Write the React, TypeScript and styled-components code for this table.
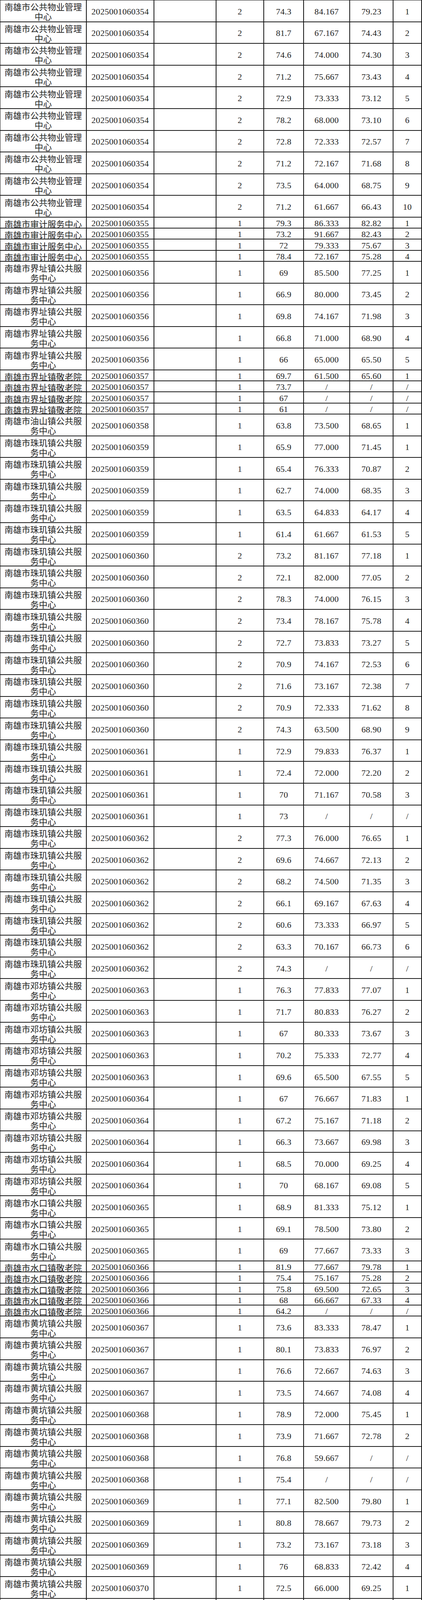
import React from 'react';
import styled, { createGlobalStyle } from 'styled-components';

type Group = {
  name: string;
  code: string;
  n: number;
  tall: boolean;
  rows: (string | number)[][];
};

const S = '/';

const groups: Group[] = [
  {
    name: '南雄市公共物业管理中心', code: '2025001060354', n: 2, tall: true,
    rows: [
      ['74.3', '84.167', '79.23', 1], ['81.7', '67.167', '74.43', 2], ['74.6', '74.000', '74.30', 3],
      ['71.2', '75.667', '73.43', 4], ['72.9', '73.333', '73.12', 5], ['78.2', '68.000', '73.10', 6],
      ['72.8', '72.333', '72.57', 7], ['71.2', '72.167', '71.68', 8], ['73.5', '64.000', '68.75', 9],
      ['71.2', '61.667', '66.43', 10],
    ],
  },
  {
    name: '南雄市审计服务中心', code: '2025001060355', n: 1, tall: false,
    rows: [['79.3', '86.333', '82.82', 1], ['73.2', '91.667', '82.43', 2], ['72', '79.333', '75.67', 3], ['78.4', '72.167', '75.28', 4]],
  },
  {
    name: '南雄市界址镇公共服务中心', code: '2025001060356', n: 1, tall: true,
    rows: [['69', '85.500', '77.25', 1], ['66.9', '80.000', '73.45', 2], ['69.8', '74.167', '71.98', 3], ['66.8', '71.000', '68.90', 4], ['66', '65.000', '65.50', 5]],
  },
  {
    name: '南雄市界址镇敬老院', code: '2025001060357', n: 1, tall: false,
    rows: [['69.7', '61.500', '65.60', 1], ['73.7', S, S, S], ['67', S, S, S], ['61', S, S, S]],
  },
  {
    name: '南雄市油山镇公共服务中心', code: '2025001060358', n: 1, tall: true,
    rows: [['63.8', '73.500', '68.65', 1]],
  },
  {
    name: '南雄市珠玑镇公共服务中心', code: '2025001060359', n: 1, tall: true,
    rows: [['65.9', '77.000', '71.45', 1], ['65.4', '76.333', '70.87', 2], ['62.7', '74.000', '68.35', 3], ['63.5', '64.833', '64.17', 4], ['61.4', '61.667', '61.53', 5]],
  },
  {
    name: '南雄市珠玑镇公共服务中心', code: '2025001060360', n: 2, tall: true,
    rows: [
      ['73.2', '81.167', '77.18', 1], ['72.1', '82.000', '77.05', 2], ['78.3', '74.000', '76.15', 3],
      ['73.4', '78.167', '75.78', 4], ['72.7', '73.833', '73.27', 5], ['70.9', '74.167', '72.53', 6],
      ['71.6', '73.167', '72.38', 7], ['70.9', '72.333', '71.62', 8], ['74.3', '63.500', '68.90', 9],
    ],
  },
  {
    name: '南雄市珠玑镇公共服务中心', code: '2025001060361', n: 1, tall: true,
    rows: [['72.9', '79.833', '76.37', 1], ['72.4', '72.000', '72.20', 2], ['70', '71.167', '70.58', 3], ['73', S, S, S]],
  },
  {
    name: '南雄市珠玑镇公共服务中心', code: '2025001060362', n: 2, tall: true,
    rows: [
      ['77.3', '76.000', '76.65', 1], ['69.6', '74.667', '72.13', 2], ['68.2', '74.500', '71.35', 3],
      ['66.1', '69.167', '67.63', 4], ['60.6', '73.333', '66.97', 5], ['63.3', '70.167', '66.73', 6],
      ['74.3', S, S, S],
    ],
  },
  {
    name: '南雄市邓坊镇公共服务中心', code: '2025001060363', n: 1, tall: true,
    rows: [['76.3', '77.833', '77.07', 1], ['71.7', '80.833', '76.27', 2], ['67', '80.333', '73.67', 3], ['70.2', '75.333', '72.77', 4], ['69.6', '65.500', '67.55', 5]],
  },
  {
    name: '南雄市邓坊镇公共服务中心', code: '2025001060364', n: 1, tall: true,
    rows: [['67', '76.667', '71.83', 1], ['67.2', '75.167', '71.18', 2], ['66.3', '73.667', '69.98', 3], ['68.5', '70.000', '69.25', 4], ['70', '68.167', '69.08', 5]],
  },
  {
    name: '南雄市水口镇公共服务中心', code: '2025001060365', n: 1, tall: true,
    rows: [['68.9', '81.333', '75.12', 1], ['69.1', '78.500', '73.80', 2], ['69', '77.667', '73.33', 3]],
  },
  {
    name: '南雄市水口镇敬老院', code: '2025001060366', n: 1, tall: false,
    rows: [['81.9', '77.667', '79.78', 1], ['75.4', '75.167', '75.28', 2], ['75.8', '69.500', '72.65', 3], ['68', '66.667', '67.33', 4], ['64.2', S, S, S]],
  },
  {
    name: '南雄市黄坑镇公共服务中心', code: '2025001060367', n: 1, tall: true,
    rows: [['73.6', '83.333', '78.47', 1], ['80.1', '73.833', '76.97', 2], ['76.6', '72.667', '74.63', 3], ['73.5', '74.667', '74.08', 4]],
  },
  {
    name: '南雄市黄坑镇公共服务中心', code: '2025001060368', n: 1, tall: true,
    rows: [['78.9', '72.000', '75.45', 1], ['73.9', '71.667', '72.78', 2], ['76.8', '59.667', S, S], ['75.4', S, S, S]],
  },
  {
    name: '南雄市黄坑镇公共服务中心', code: '2025001060369', n: 1, tall: true,
    rows: [['77.1', '82.500', '79.80', 1], ['80.8', '78.667', '79.73', 2], ['73.2', '73.167', '73.18', 3], ['76', '68.833', '72.42', 4]],
  },
  {
    name: '南雄市黄坑镇公共服务中心', code: '2025001060370', n: 1, tall: true,
    rows: [['72.5', '66.000', '69.25', 1], ['63.7', '72.500', '68.10', 2], ['63.6', '65.500', '64.55', 3], ['73.6', '57.500', S, S]],
  },
  {
    name: '南雄市百顺镇公共服务中心', code: '2025001060371', n: 1, tall: true,
    rows: [['75', '83.667', '79.33', 1], ['76.3', '76.333', '76.32', 2], ['70.9', '68.667', '69.78', 3], ['70.8', S, S, S]],
  },
  {
    name: '南雄市百顺镇公共服务中心', code: '2025001060372', n: 1, tall: true,
    rows: [['70.1', '78.167', '74.13', 1], ['73', '67.833', '70.42', 2], ['68.5', '68.667', '68.58', 3], ['63.4', '65.167', '64.28', 4], ['63.6', '64.500', '64.05', 5]],
  },
  {
    name: '南雄市雄州街道公共服务中心', code: '2025001060373', n: 1, tall: true,
    rows: [['71.6', '72.167', '71.88', 1], ['60.2', '71.833', '66.02', 2]],
  },
  {
    name: '南雄市雄州街道公共服务中心', code: '2025001060374', n: 1, tall: true,
    rows: [['74.9', '81.833', '78.37', 1], ['79.8', '70.833', '75.32', 2], ['74.8', '73.333', '74.07', 3], ['73.8', '69.667', '71.73', 4]],
  },
  {
    name: '南雄市帽子峰镇敬老院', code: '2025001060375', n: 1, tall: true,
    rows: [['70', '81.000', '75.50', 1], ['67.1', '77.500', '72.30', 2], ['68.6', '70.667', '69.63', 3], ['66.8', '68.333', '67.57', 4], ['64.1', S, S, S]],
  },
];

const GlobalStyle = createGlobalStyle`
  html, body {
    margin: 0;
    padding: 0;
    background: #fff;
  }
  * {
    box-sizing: border-box;
  }
`;

const Sheet = styled.div`
  width: 1080px;
  border-top: 1px solid #111;
  border-left: 1px solid #111;
  color: #222;
`;

const Row = styled.div<{ $tall: boolean }>`
  display: grid;
  grid-template-columns: 1fr 173px 159px 122px 102px 118px 111px 73px;
  height: ${p => (p.$tall ? 55.6 : 28.25)}px;
`;

const Cell = styled.div`
  display: flex;
  align-items: center;
  justify-content: center;
  text-align: center;
  padding: 4px 4px 0;
  font-family: 'Liberation Serif', serif;
  font-size: 22px;
  line-height: 22px;
  letter-spacing: 0.3px;
  white-space: nowrap;
  border-right: 2px solid #111;
  border-bottom: 2px solid #1a1a1a;
`;

const NameCell = styled(Cell)<{ $tall: boolean }>`
  font-family: 'Noto Sans CJK SC', sans-serif;
  letter-spacing: 0;
  line-height: ${p => (p.$tall ? 25 : 22)}px;
  padding: ${p => (p.$tall ? 3 : 4)}px 8px 0;
  white-space: normal;
  word-break: break-all;
`;

export default function App() {
  return (
    <>
      <GlobalStyle />
      <Sheet>
        {groups.map((g, gi) =>
          g.rows.map((r, ri) => (
            <Row key={`${gi}-${ri}`} $tall={g.tall}>
              <NameCell $tall={g.tall}>{g.name}</NameCell>
              <Cell>{g.code}</Cell>
              <Cell />
              <Cell>{g.n}</Cell>
              <Cell>{r[0]}</Cell>
              <Cell>{r[1]}</Cell>
              <Cell>{r[2]}</Cell>
              <Cell>{r[3]}</Cell>
            </Row>
          )),
        )}
      </Sheet>
    </>
  );
}
